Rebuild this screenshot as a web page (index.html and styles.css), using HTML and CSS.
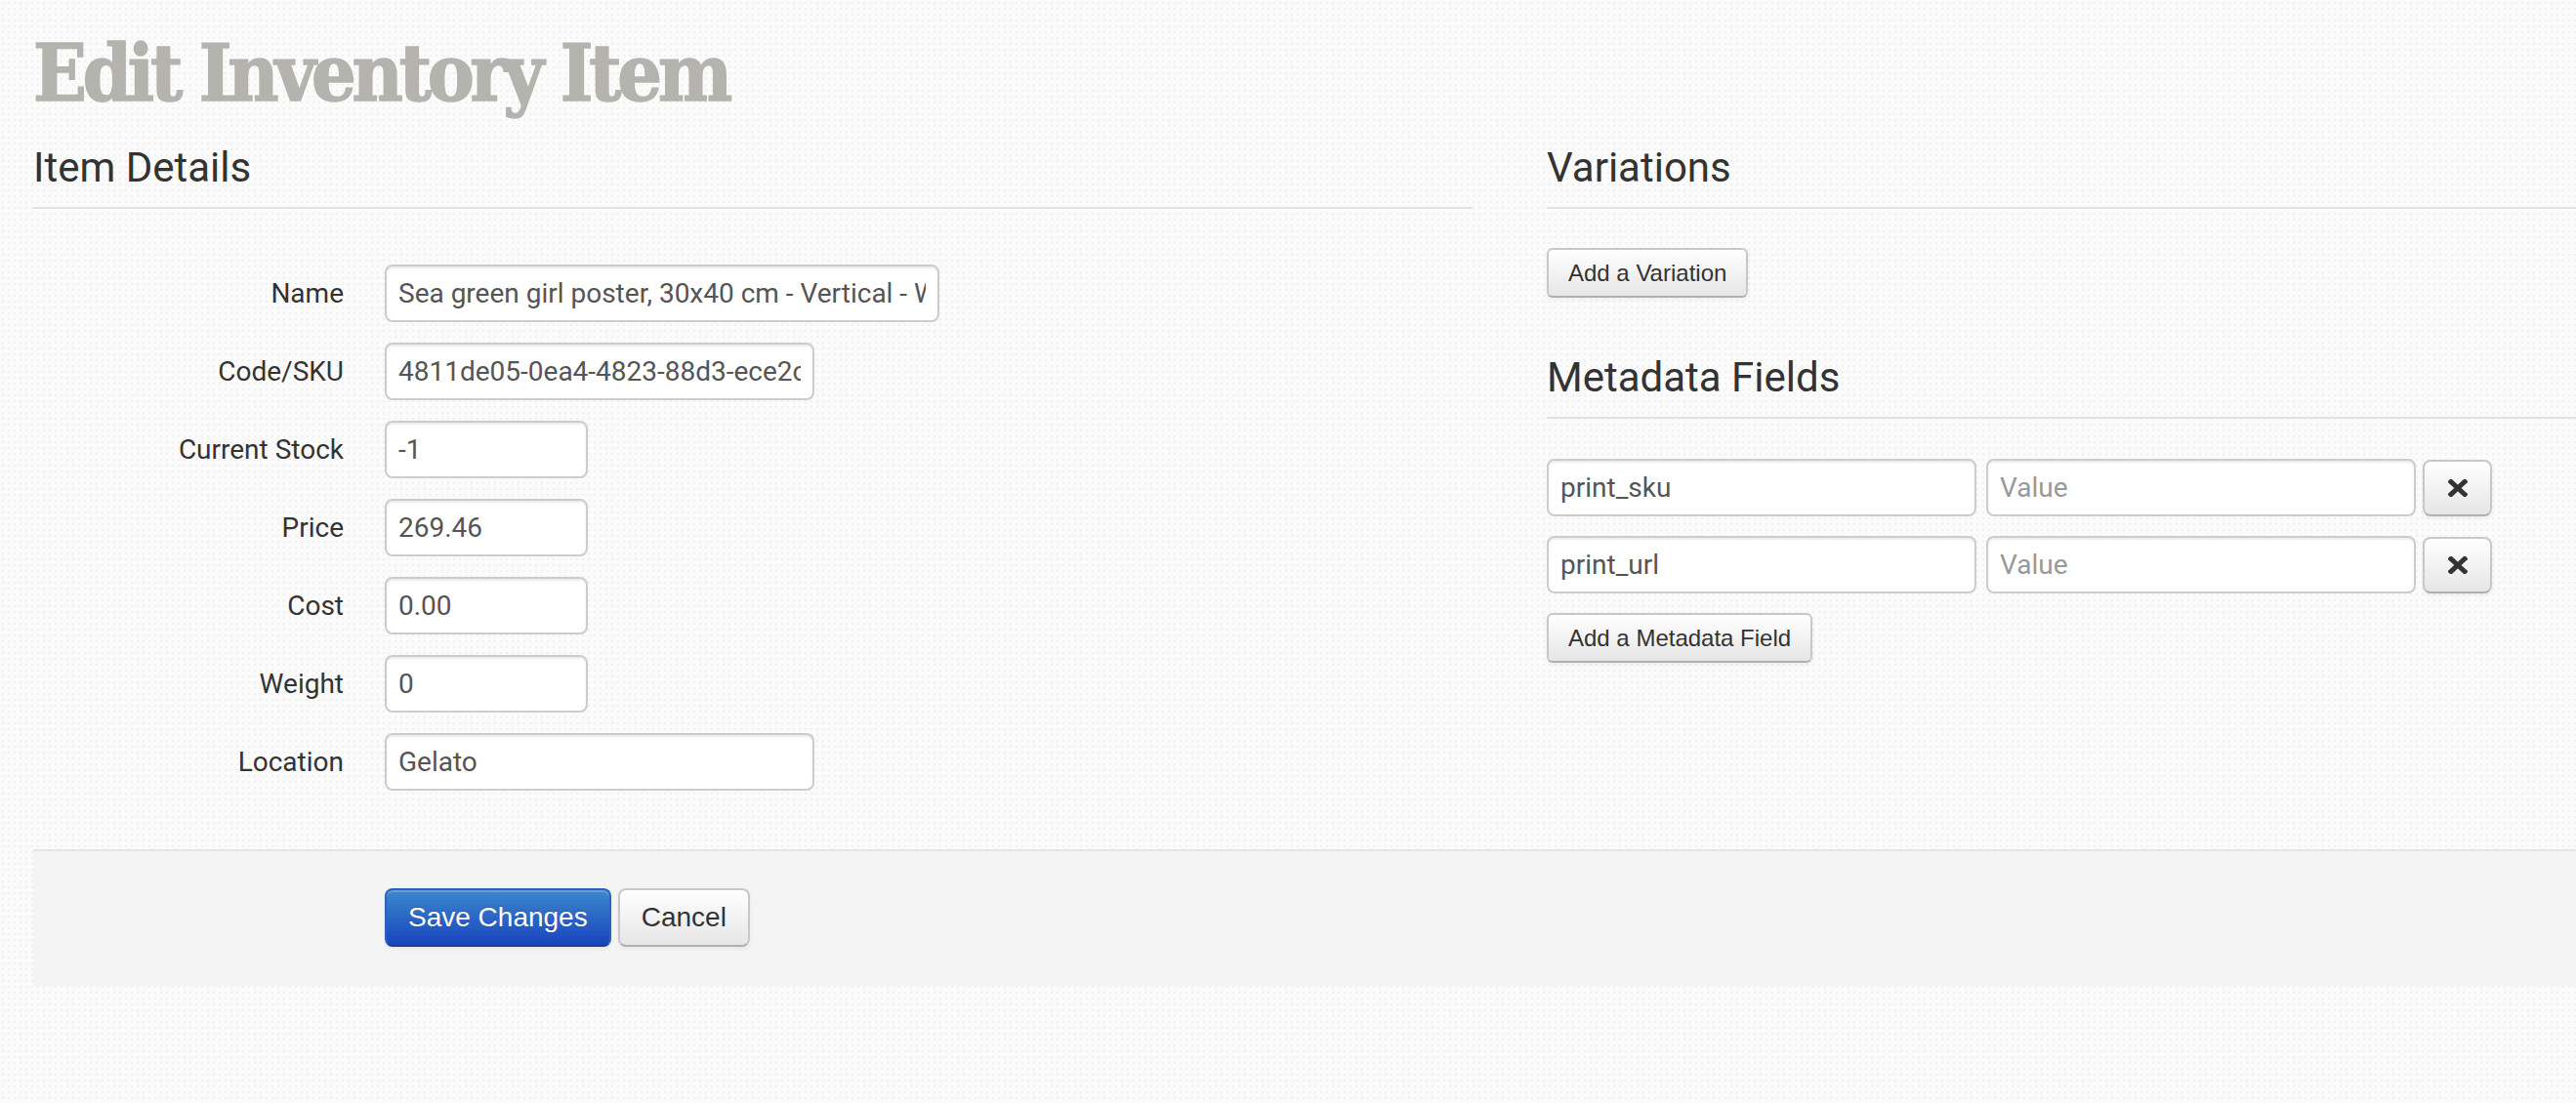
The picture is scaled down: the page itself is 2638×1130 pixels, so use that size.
FILE: index.html
```html
<!doctype html>
<html lang="en">
<head>
    <meta charset="UTF-8">
    <meta name="viewport" content="width=device-width, initial-scale=1.0">
    <title>Edit Inventory Item</title>
    <link rel="stylesheet" href="styles.css">
</head>
<body>
    <div class="page">
        <h1 class="page-title">Edit Inventory Item</h1>
        <form class="item-form" action="" novalidate>
            <div class="columns">
                <div class="column">
                    <h3 class="section-title">Item Details</h3>
                    <div class="fields">
                        <div class="control-group">
                            <label class="control-label" for="name">Name</label>
                            <input id="name" class="input-xlarge" type="text" value="Sea green girl poster, 30x40 cm - Vertical - White frame">
                        </div>
                        <div class="control-group">
                            <label class="control-label" for="sku">Code/SKU</label>
                            <input id="sku" class="input-default" type="text" value="4811de05-0ea4-4823-88d3-ece2c0f4a6b1">
                        </div>
                        <div class="control-group">
                            <label class="control-label" for="stock">Current Stock</label>
                            <input id="stock" class="input-small" type="text" value="-1">
                        </div>
                        <div class="control-group">
                            <label class="control-label" for="price">Price</label>
                            <input id="price" class="input-small" type="text" value="269.46">
                        </div>
                        <div class="control-group">
                            <label class="control-label" for="cost">Cost</label>
                            <input id="cost" class="input-small" type="text" value="0.00">
                        </div>
                        <div class="control-group">
                            <label class="control-label" for="weight">Weight</label>
                            <input id="weight" class="input-small" type="text" value="0">
                        </div>
                        <div class="control-group">
                            <label class="control-label" for="location">Location</label>
                            <input id="location" class="input-default" type="text" value="Gelato">
                        </div>
                    </div>
                </div>
                <div class="column">
                    <h3 class="section-title">Variations</h3>
                    <div class="variations">
                        <button type="button" class="btn btn-small">Add a Variation</button>
                    </div>
                    <h3 class="section-title metadata-title">Metadata Fields</h3>
                    <div class="metadata">
                        <div class="meta-row">
                            <input class="input-default" type="text" value="print_sku">
                            <input class="input-default" type="text" placeholder="Value">
                            <button type="button" class="btn btn-icon" title="Remove">
                                <svg width="20" height="18" viewBox="0 0 20 18"><path d="M3 2.5 L17 15.5 M17 2.5 L3 15.5" stroke="#333" stroke-width="5" stroke-linecap="square" fill="none"/></svg>
                            </button>
                        </div>
                        <div class="meta-row">
                            <input class="input-default" type="text" value="print_url">
                            <input class="input-default" type="text" placeholder="Value">
                            <button type="button" class="btn btn-icon" title="Remove">
                                <svg width="20" height="18" viewBox="0 0 20 18"><path d="M3 2.5 L17 15.5 M17 2.5 L3 15.5" stroke="#333" stroke-width="5" stroke-linecap="square" fill="none"/></svg>
                            </button>
                        </div>
                        <button type="button" class="btn btn-small">Add a Metadata Field</button>
                    </div>
                </div>
            </div>
            <div class="form-actions">
                <button type="submit" class="btn btn-primary">Save Changes</button>
                <button type="button" class="btn">Cancel</button>
            </div>
        </form>
    </div>
</body>
</html>
```

FILE: styles.css
```css
html,
body {
    margin: 0;
}

body {
    overflow: hidden;

    font-family: Roboto, "Liberation Sans", sans-serif;
    font-size: 28px;
    line-height: 40px;
    color: #333;
    background-color: #fbfbfb;
    /* the faint dotted paper texture */
    background-image: radial-gradient(circle, #f0f0f0 1px, transparent 1.6px);
    background-size: 6px 6px;
}

.page {
    padding: 35px 0 0 34px;
}

.page-title {
    margin: 0;

    font-family: "DejaVu Serif", serif;
    font-stretch: condensed;
    font-weight: bold;
    font-size: 80px;
    line-height: 80px;
    letter-spacing: -4.2px;
    color: #b4b3ae;
    /* a touch heavier, like the slab face of the original */
    -webkit-text-stroke: 1.5px #b4b3ae;
}

.columns {
    display: grid;
    grid-template-columns: 1474px 1fr;
    column-gap: 76px;
    margin-top: 32px;
}

.section-title {
    margin: 0;
    padding-bottom: 15px;
    border-bottom: 2px solid #e2e2e2;

    font-size: 42px;
    line-height: 50px;
    font-weight: normal;
    color: #333;
}

.fields {
    margin-top: 57px;
}

.control-group {
    display: flex;
    align-items: center;
    margin-bottom: 21px;
}

.control-label {
    flex: none;
    width: 318px;
    margin-right: 42px;

    text-align: right;
}

input {
    box-sizing: border-box;
    height: 59px;
    margin: 0;
    padding: 8px 12px;
    border: 2px solid #ccc;
    border-radius: 8px;

    font-family: Roboto, "Liberation Sans", sans-serif;
    font-size: 28px;
    color: #555;
    background: #fff;
    box-shadow: inset 0 2px 2px rgba(0, 0, 0, .075);
}

input::placeholder {
    color: #999;
}

.input-small {
    width: 208px;
}

.input-default {
    width: 440px;
}

.input-xlarge {
    width: 568px;
}

.variations {
    padding-top: 40px;
}

.metadata-title {
    margin-top: 57px;
}

.metadata {
    padding-top: 41px;
}

.meta-row {
    display: flex;
    align-items: center;
    margin-bottom: 20px;
}

.meta-row input + input {
    margin-left: 10px;
}

.btn {
    box-sizing: border-box;
    display: inline-block;
    margin: 0;
    padding: 8px 22px;
    border: 2px solid #c8c8c8;
    border-bottom-color: #b0b0b0;
    border-radius: 8px;

    font-family: "Liberation Sans", Arial, sans-serif;
    font-size: 28px;
    line-height: 40px;
    color: #333;
    background: linear-gradient(#fff, #e6e6e6);
    box-shadow: inset 0 2px 0 rgba(255, 255, 255, .2), 0 2px 4px rgba(0, 0, 0, .06);
    cursor: pointer;
}

.btn-small {
    padding: 4px 20px;
    border-radius: 6px;

    font-size: 24px;
    line-height: 39px;
}

.btn-icon {
    display: flex;
    align-items: center;
    justify-content: center;
    width: 71px;
    height: 58px;
    margin-left: 7px;
    padding: 0;
}

.btn-primary {
    border-color: #2b62bd #2b62bd #173f9f;

    color: #fff;
    background: linear-gradient(#3d88cd, #1844bd);
    text-shadow: 0 -1px 0 rgba(0, 0, 0, .2);
}

.form-actions {
    display: flex;
    gap: 7px;
    margin-top: 39px;
    padding: 38px 40px 40px 360px;
    border-top: 2px solid #e5e5e5;

    background: #f4f4f4;
}
```
